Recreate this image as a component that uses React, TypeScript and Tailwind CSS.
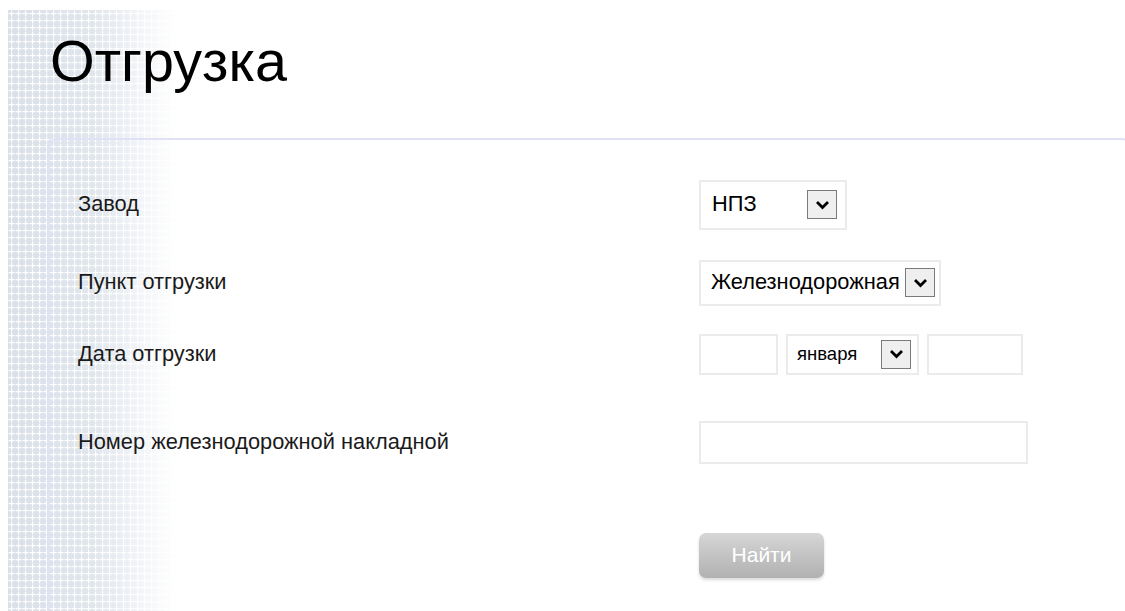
import React from 'react';

const font = "font-['Liberation_Sans',Arial,sans-serif]";

// textured strip on the left edge of the page
function Texture() {
  return (
    <svg className="absolute left-[8px] top-[10px] h-[601px] w-[170px]" aria-hidden>
      <defs>
        <pattern id="crosses" width="7" height="7" patternUnits="userSpaceOnUse">
          <rect width="7" height="7" fill="#d9e0e8" />
          <rect x="3" y="0.5" width="1.2" height="6" fill="#ffffff" />
          <rect x="0.5" y="3" width="6" height="1.2" fill="#ffffff" />
        </pattern>
        <linearGradient id="fade" x1="0" x2="1" y1="0" y2="0">
          <stop offset="0" stopColor="#fff" stopOpacity="1" />
          <stop offset="0.5" stopColor="#fff" stopOpacity="0.8" />
          <stop offset="0.8" stopColor="#fff" stopOpacity="0.3" />
          <stop offset="1" stopColor="#fff" stopOpacity="0" />
        </linearGradient>
        <mask id="fadeMask">
          <rect width="100%" height="100%" fill="url(#fade)" />
        </mask>
      </defs>
      <rect width="100%" height="100%" fill="url(#crosses)" mask="url(#fadeMask)" />
    </svg>
  );
}

function Arrow() {
  return (
    <span className="flex h-[29px] w-[30px] shrink-0 items-center justify-center border border-[#7a7a7a] bg-[#efefef]">
      <svg width="15" height="10" viewBox="0 0 15 10">
        <path d="M2 2 L7.5 7.5 L13 2" fill="none" stroke="#000" strokeWidth="2.8" />
      </svg>
    </span>
  );
}

function Row({ label, children, className }: { label: string; children: React.ReactNode; className?: string }) {
  return (
    <div className={`flex items-center ${className ?? ''}`}>
      <div className="w-[621px] text-[21.8px] text-[#1a1a1a]">{label}</div>
      <div className="flex items-center gap-2">{children}</div>
    </div>
  );
}

export default function App() {
  return (
    <div className={`relative h-[611px] overflow-hidden bg-white ${font}`}>
      <Texture />
      <div className="relative">
        <h1 className="ml-[50px] pt-[33px] text-[57.5px] leading-none text-black">Отгрузка</h1>
        <div className="ml-[47px] mt-[47px] h-[520px] w-[1085px] rounded-[10px] border-2 border-[#e0e0f7] pl-[29px] pt-[40px]">
          <Row label="Завод">
            <div className="flex h-[50px] w-[148px] items-center border-2 border-[#ebebeb] bg-white pl-[11px] pr-[8px]">
              <span className="flex-1 text-[21.8px] text-black">НПЗ</span>
              <Arrow />
            </div>
          </Row>

          <Row label="Пункт отгрузки" className="mt-[30px]">
            <div className="flex h-[46px] w-[242px] items-center justify-between border-2 border-[#ebebeb] bg-white pl-[10px] pr-[4px]">
              <span className="text-[21.8px] text-black">Железнодорожная</span>
              <Arrow />
            </div>
          </Row>

          <Row label="Дата отгрузки" className="mt-[28px]">
            <div className="h-[41px] w-[79px] border-2 border-[#ebebeb] bg-white" />
            <div className="flex h-[41px] w-[133px] items-center border-2 border-[#ebebeb] bg-white pl-[9px] pr-[6px]">
              <span className="flex-1 text-[18.5px] text-black">января</span>
              <Arrow />
            </div>
            <div className="h-[41px] w-[96px] border-2 border-[#ebebeb] bg-white" />
          </Row>

          <Row label="Номер железнодорожной накладной" className="mt-[46px]">
            <div className="h-[43px] w-[329px] border-2 border-[#ebebeb] bg-white" />
          </Row>

          <div className="mt-[69px] pl-[621px]">
            <button className="h-[45px] w-[125px] rounded-[7px] bg-gradient-to-b from-[#d6d6d6] to-[#b1b1b1] text-[21px] text-white shadow-[0_2px_3px_rgba(0,0,0,0.15)]">
              Найти
            </button>
          </div>
        </div>
      </div>
    </div>
  );
}
